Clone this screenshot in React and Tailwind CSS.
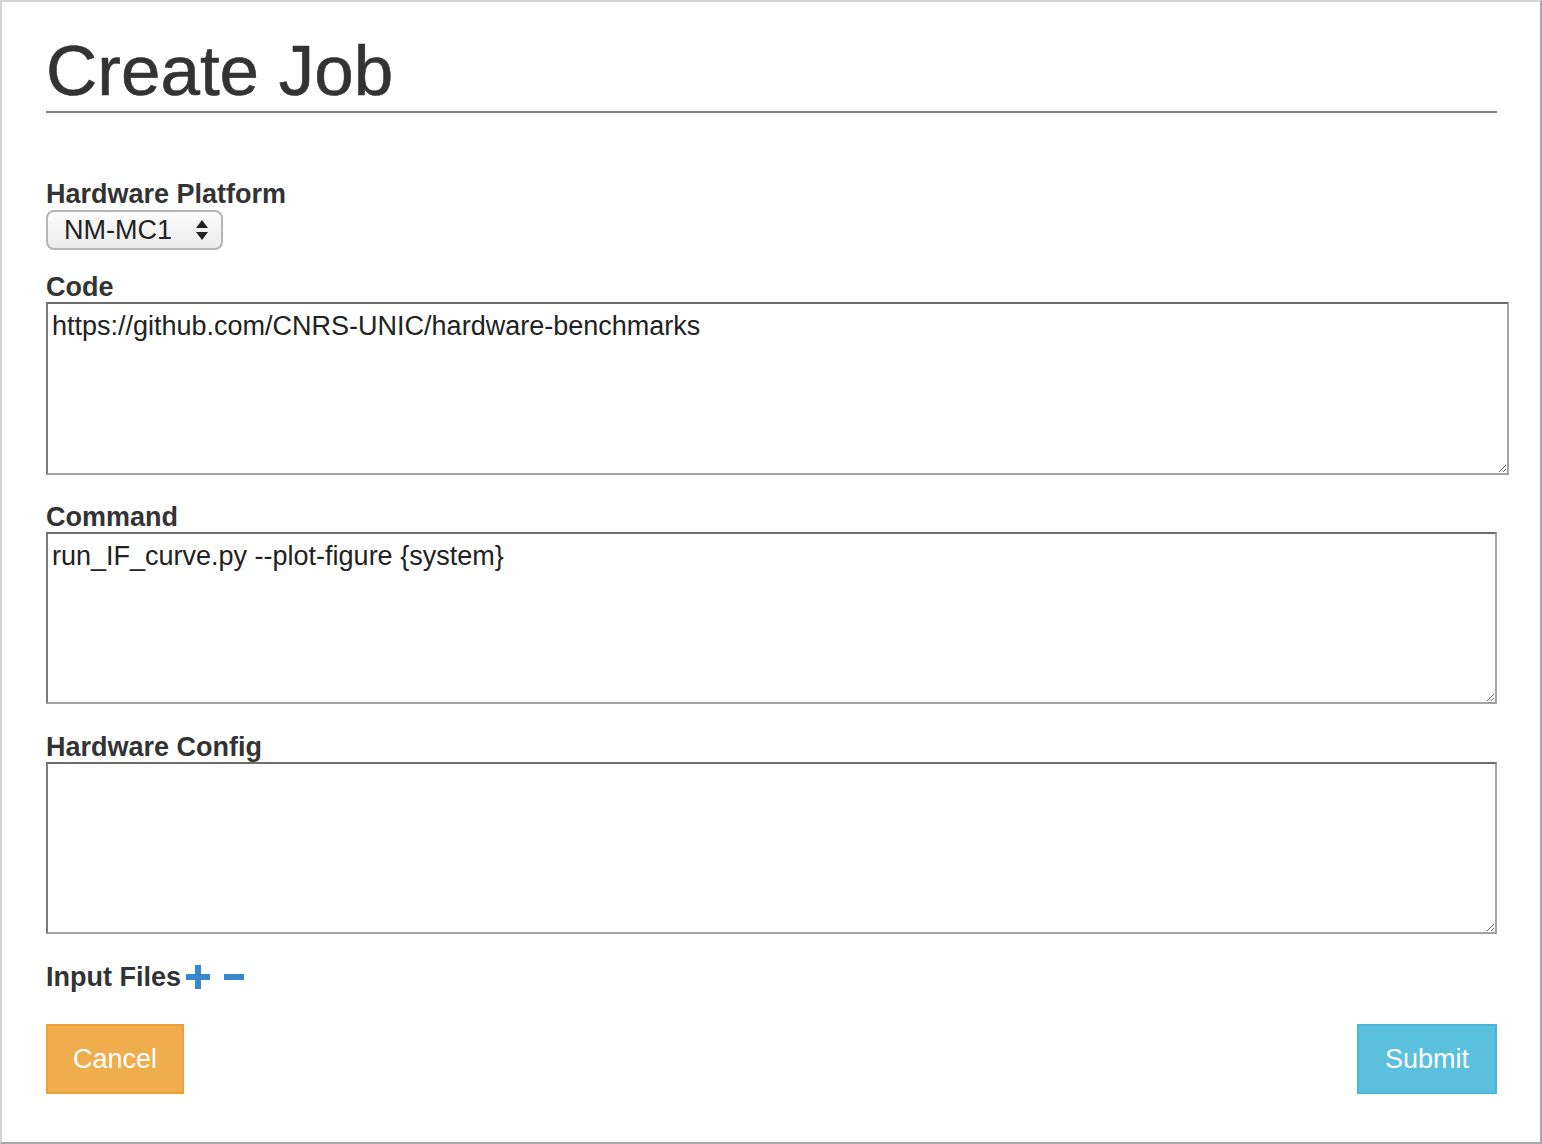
import React from "react";

const Label = ({ children, className = "" }) => (
	<label className={`block text-[27px] leading-[30px] font-bold text-[#333] ${className}`}>
		{children}
	</label>
);

const Area = ({ value, className = "" }) => (
	<textarea
		readOnly
		defaultValue={value}
		className={`block h-[172px] border-2 border-t-[#6e6e6e] border-l-[#7a7a7a] border-r-[#a3a3a3] border-b-[#a3a3a3] bg-white px-[4px] pt-[6px] text-[27px] leading-[32px] text-[#222] outline-none ${className}`}
		style={{ fontFamily: '"Liberation Sans", Arial, sans-serif' }}
	/>
);

export default function App() {
	return (
		<div
			className="h-[1144px] w-[1542px] overflow-hidden border-t-2 border-l-2 border-t-[#d4d4d4] border-l-[#d4d4d4] border-r-2 border-b-2 border-r-[#a8a8a8] border-b-[#a8a8a8] bg-white"
			style={{ fontFamily: '"Liberation Sans", Arial, sans-serif' }}
		>
			<div className="pl-[44px] pr-[43px] pt-[33px]">
				{/* Title */}
				<h1 className="border-b-2 border-[#808080] pb-[4px] text-[71px] leading-[72px] text-[#333] [-webkit-text-stroke:0.6px_#333]">
					Create Job
				</h1>

				<Label className="mt-[66px]">Hardware Platform</Label>
				<div className="mt-[1px] flex h-[40px] w-[177px] items-center justify-between rounded-[8px] border-2 border-[#b5b5b5] bg-gradient-to-b from-[#fcfcfc] to-[#ececec] pl-[16px] pr-[12px] text-[27px] text-[#222]">
					<span>NM-MC1</span>
					<svg width="14" height="24" viewBox="0 0 14 24">
						<path d="M7 2 L13 10 L1 10 Z" fill="#222" />
						<path d="M1 14 L13 14 L7 22 Z" fill="#222" />
					</svg>
				</div>

				<Label className="mt-[22px]">Code</Label>
				<Area
					value="https://github.com/CNRS-UNIC/hardware-benchmarks"
					className="w-[1463px] h-[173px]"
				/>

				<Label className="mt-[27px]">Command</Label>
				<Area value="run_IF_curve.py --plot-figure {system}" className="w-[1451px]" />

				<Label className="mt-[28px]">Hardware Config</Label>
				<Area value="" className="w-[1451px]" />

				<div className="mt-[28px] flex items-center">
					<Label>Input Files</Label>
					<svg width="26" height="26" viewBox="0 0 26 26" className="ml-[4px]">
						<rect x="10" y="1" width="6" height="24" fill="#3a87d0" />
						<rect x="1" y="10" width="24" height="6" fill="#3a87d0" />
					</svg>
					<svg width="22" height="26" viewBox="0 0 22 26" className="ml-[12px]">
						<rect x="1" y="10" width="20" height="6" fill="#3a87d0" />
					</svg>
				</div>

				<div className="mt-[32px] flex justify-between">
					<button className="h-[70px] w-[138px] border-2 border-[#eea236] bg-[#f0ad4e] text-[27px] text-white">
						Cancel
					</button>
					<button className="h-[70px] w-[140px] border-2 border-[#46b8da] bg-[#5bc0de] text-[27px] text-white">
						Submit
					</button>
				</div>
			</div>
		</div>
	);
}
